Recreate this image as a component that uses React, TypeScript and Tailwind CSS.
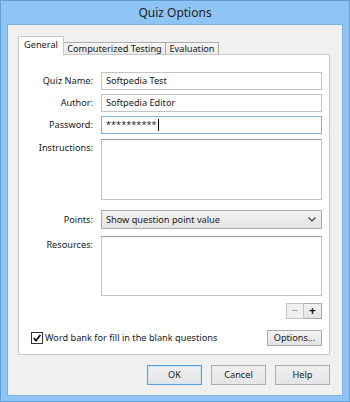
const FONT = { fontFamily: '"Noto Sans", "Segoe UI", sans-serif' };

function Field({ label, value, focused }: { label: string; value: string; focused?: boolean }) {
  return (
    <div className="flex items-center">
      <span className="w-[75px] pr-[1px] text-right">{label}</span>
      <div
        className={`ml-[7px] flex h-[18px] w-[221px] items-center border bg-white px-[4px] ${
          focused ? 'border-[#7eb4ea]' : 'border-[#c4c4c4]'
        }`}
      >
        {value}
        {focused && <span className="ml-[1px] h-[12px] w-px bg-black" />}
      </div>
    </div>
  );
}

function Area({ label, height }: { label: string; height: string }) {
  return (
    <div className="flex items-start">
      <span className="w-[75px] pr-[1px] pt-[4px] text-right">{label}</span>
      <div className={`ml-[7px] w-[221px] border border-[#c4c4c4] border-t-[#9a9a9a] bg-white ${height}`} />
    </div>
  );
}

function DlgButton({ children, primary }: { children: string; primary?: boolean }) {
  return (
    <button
      className={`flex h-[20px] w-[55px] items-center justify-center border bg-gradient-to-b from-[#f0f0f0] to-[#e5e5e5] ${
        primary ? 'border-[#5b9fde] shadow-[inset_0_0_0_1px_#cfe5fa]' : 'border-[#acacac]'
      }`}
    >
      {children}
    </button>
  );
}

export default function App() {
  return (
    <div
      className="flex h-[402px] w-[350px] flex-col whitespace-nowrap border border-[#5f9fd8] bg-[#8ec5f5] text-[9.2px] leading-none text-[#1a1a1a]"
      style={FONT}
    >
      {/* title bar */}
      <div className="flex h-[23px] items-center justify-center text-[12px] text-[#222]">Quiz Options</div>

      {/* client area */}
      <div className="mx-[6px] mb-[5px] flex flex-1 flex-col border border-[#7fb2e0] bg-[#f0f0f0] pl-[10px] pr-[12px] pt-[11px]">
        {/* tabs */}
        <div className="flex items-end">
          <div className="relative z-10 -mb-px flex h-[19px] w-[46px] items-start justify-center border border-b-0 border-[#c9c9c9] bg-white pt-[3px]">
            General
          </div>
          <div className="flex h-[12px] w-[102px] items-center justify-center border border-b-0 border-l-0 border-[#acacac] bg-gradient-to-b from-[#f7f7f7] to-[#e8e8e8]">
            Computerized Testing
          </div>
          <div className="flex h-[12px] w-[53px] items-center justify-center border border-b-0 border-l-0 border-[#acacac] bg-gradient-to-b from-[#f7f7f7] to-[#e8e8e8]">
            Evaluation
          </div>
        </div>

        {/* panel */}
        <div className="flex h-[301px] flex-col border border-[#c9c9c9] bg-white pt-[17px]">
          <div className="flex flex-col gap-[4px]">
            <Field label="Quiz Name:" value="Softpedia Test" />
            <Field label="Author:" value="Softpedia Editor" />
            <Field label="Password:" value="**********" focused />
          </div>

          <div className="mt-[5px]">
            <Area label="Instructions:" height="h-[61px]" />
          </div>

          <div className="mt-[10px] flex items-center">
            <span className="w-[75px] pr-[1px] text-right">Points:</span>
            <div className="ml-[7px] flex h-[19px] w-[221px] items-center justify-between border border-[#acacac] bg-gradient-to-b from-[#f2f2f2] to-[#e4e4e4] pl-[4px] pr-[5px]">
              <span>Show question point value</span>
              <svg width="8" height="5" viewBox="0 0 8 5" className="text-[#444]">
                <path d="M0.5 0.5 L4 4 L7.5 0.5" fill="none" stroke="currentColor" strokeWidth="1.2" />
              </svg>
            </div>
          </div>

          <div className="mt-[7px]">
            <Area label="Resources:" height="h-[60px]" />
          </div>

          <div className="mt-[7px] flex justify-end pr-[7px]">
            <div className="flex h-[16px] w-[18px] items-center justify-center border border-[#c4c4c4] bg-[#f0f0f0] text-[12px] text-[#a0a0a0]">
              −
            </div>
            <div className="flex h-[16px] w-[18px] items-center justify-center border border-l-0 border-[#acacac] bg-gradient-to-b from-[#f2f2f2] to-[#e4e4e4] text-[12px] font-bold">
              +
            </div>
          </div>

          <div className="mt-[11px] flex items-center justify-between pl-[12px] pr-[7px]">
            <label className="flex items-center gap-[2px]">
              <span className="flex h-[12px] w-[12px] items-center justify-center border border-[#333] bg-white">
                <svg width="10" height="10" viewBox="0 0 10 10">
                  <path d="M1.8 5.2 L4 7.6 L8.4 2" fill="none" stroke="#111" strokeWidth="1.8" />
                </svg>
              </span>
              Word bank for fill in the blank questions
            </label>
            <div className="flex h-[16px] w-[55px] items-center justify-center border border-[#acacac] bg-gradient-to-b from-[#f2f2f2] to-[#e4e4e4]">
              Options...
            </div>
          </div>
        </div>

        {/* dialog buttons */}
        <div className="mt-[10px] flex justify-end gap-[9px]">
          <DlgButton primary>OK</DlgButton>
          <DlgButton>Cancel</DlgButton>
          <DlgButton>Help</DlgButton>
        </div>
      </div>
    </div>
  );
}
